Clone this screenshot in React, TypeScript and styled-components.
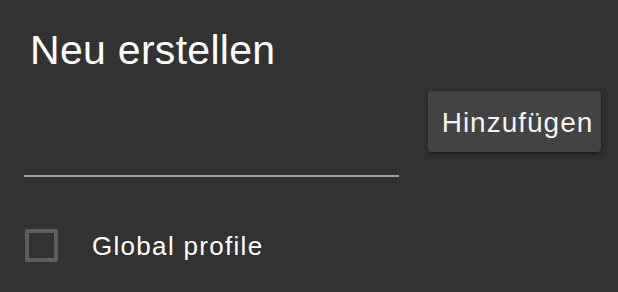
import React from "react";
import styled, { createGlobalStyle } from "styled-components";

const FONT = `"Liberation Sans", Arial, Helvetica, sans-serif`;

const GlobalStyle = createGlobalStyle`
  html, body {
    margin: 0;
    padding: 0;
    background: #323232;
  }
  body {
    font-family: ${FONT};
    color: #ffffff;
  }
`;

const Dialog = styled.div`
  width: 618px;
  height: 292px;
  box-sizing: border-box;
  padding: 30px 17px 0 24px;
  background: #323232;
  overflow: hidden;
`;

const Title = styled.h2`
  margin: 0 0 0 6px;
  font-size: 41px;
  font-weight: 400;
  line-height: 41px;
  letter-spacing: 0.3px;
`;

const FormRow = styled.div`
  display: flex;
  align-items: flex-start;
  gap: 29px;
  margin-top: 20px;
`;

const Field = styled.input`
  flex: 0 0 375px;
  height: 86px;
  box-sizing: border-box;
  background: transparent;
  border: none;
  border-bottom: 2px solid #9d9d9d;
  outline: none;
  color: #fff;
  font-family: ${FONT};
  font-size: 27px;
  padding: 0 0 8px;
`;

const Button = styled.button`
  flex: 0 0 auto;
  width: 173px;
  height: 61px;
  padding: 2px 0 0 6px;
  border: none;
  border-radius: 4px;
  background: #434343;
  color: #f2f2f2;
  font-family: ${FONT};
  font-size: 28px;
  letter-spacing: 1px;
  line-height: 28px;
  box-shadow: 0 3px 2px -2px rgba(0, 0, 0, 0.35), 0 2px 4px 0 rgba(0, 0, 0, 0.2),
    0 1px 8px 0 rgba(0, 0, 0, 0.15);
  cursor: pointer;
`;

const CheckRow = styled.label`
  display: flex;
  align-items: center;
  gap: 34px;
  margin: 51px 0 0 1px;
  cursor: pointer;
`;

const Box = styled.span`
  width: 33px;
  height: 33px;
  box-sizing: border-box;
  border: 4px solid #5e5e5e;
  border-radius: 2px;
`;

const Label = styled.span`
  font-size: 26px;
  letter-spacing: 1.3px;
  line-height: 33px;
  padding-top: 2px;
`;

export default function App() {
  return (
    <>
      <GlobalStyle />
      <Dialog>
        <Title>Neu erstellen</Title>
        <FormRow>
          <Field type="text" />
          <Button>Hinzufügen</Button>
        </FormRow>
        <CheckRow>
          <Box />
          <Label>Global profile</Label>
        </CheckRow>
      </Dialog>
    </>
  );
}
